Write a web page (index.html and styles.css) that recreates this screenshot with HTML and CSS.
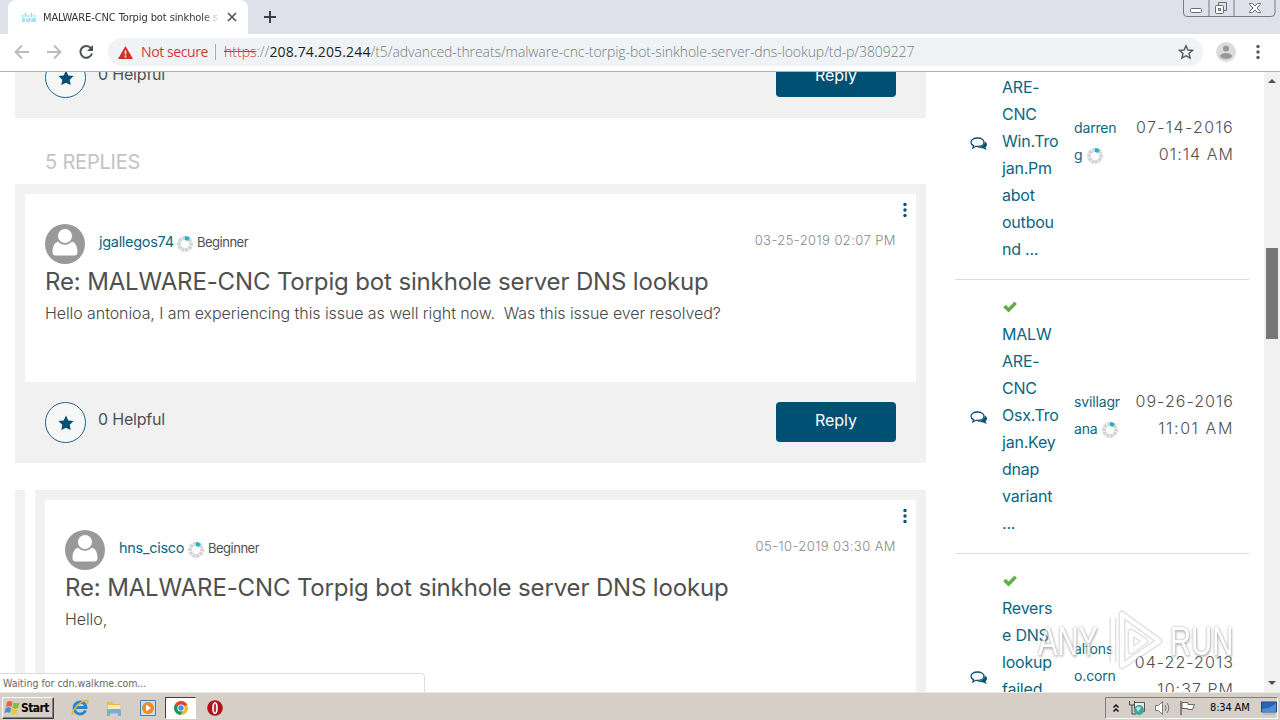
FILE: index.html
```html
<!DOCTYPE html>
<html lang="en">
<head>
<meta charset="utf-8">
<title>MALWARE-CNC Torpig bot sinkhole server DNS lookup</title>
<link rel="stylesheet" href="styles.css">
</head>
<body>
<svg class="defs" width="0" height="0">
  <symbol id="star" viewBox="0 0 16 16"><path d="M8 .5 10.3 5.4 15.6 6 11.7 9.7 12.7 15 8 12.8 3.3 15 4.3 9.7.4 6 5.7 5.4Z"/></symbol>
  <symbol id="person" viewBox="0 0 40 40"><circle cx="20" cy="20" r="20" fill="#999"/><path d="M13 17.5C9 19 7.5 23 7.5 28q0 3.500 3.500 3.500h18q3.500 0 3.500-3.500c0-5-1.500-9-5.500-10.500-1.500 2-4 3.200-7 3.200s-5.500-1.200-7-3.200Z" fill="#fff"/><circle cx="20" cy="12" r="7.500" fill="#fff" stroke="#999" stroke-width="1"/></symbol>
  <symbol id="spinner" viewBox="0 0 16 16"><circle cx="8" cy="8" r="6" fill="none" stroke="#d3d5d7" stroke-width="3.800" stroke-dasharray="3.200 .570" transform="rotate(-90 8 8)"/><path d="M8 2A6 6 0 0 1 11.800 3.400" fill="none" stroke="#1cb4d4" stroke-width="4"/></symbol>
  <symbol id="chat" viewBox="0 0 18 14"><path d="M7.500 1C3.700 1 1 2.900 1 5.200c0 1.500 1 2.700 2.600 3.400L2.900 11l3-1.700 1.600.1C11.300 9.400 14 7.500 14 5.200S11.300 1 7.500 1Z" fill="#fff" stroke="#0d4f73" stroke-width="1.300"/><path d="M14.800 4.500c1.500.8 2.200 1.800 2.200 3 0 1.100-.6 2-1.600 2.700l1.300 2.700-3.900-1.700c-2 .3-4.200-.1-5.500-1.100 4.500.1 7.500-2 7.500-5.600Z" fill="#0d4f73"/></symbol>
  <symbol id="check" viewBox="0 0 14 12"><path d="M.2 6.300 2.800 3.700l2.800 2.800L11.500.5l2.400 2.400-8.300 8.500Z" fill="#5fb045"/></symbol>
  <symbol id="dots" viewBox="0 0 6 16"><circle cx="3" cy="2.500" r="1.700"/><circle cx="3" cy="8" r="1.700"/><circle cx="3" cy="13.500" r="1.700"/></symbol>
</svg>

<div class="tabstrip">
  <div class="tab">
    <svg class="favicon" width="15" height="9" viewBox="0 0 15 9" stroke="#8bd6ee"><path d="M1.500 2v2M4.500 0v4M7.500 2v2M10.500 0v4M13.500 2v2" stroke-width="1.500"/><path d="M1 6h3M5 6h1M7 6h3M11 6h4M1 8h3M5 8h4M10 8h5" stroke-width="1.500"/></svg>
    <span class="tab-title">MALWARE-CNC Torpig bot sinkhole server</span>
    <svg class="tab-close" width="10" height="10" viewBox="0 0 10 10" stroke="#555" stroke-width="1.700"><path d="m1 1 8 8M9 1 1 9"/></svg>
  </div>
  <svg class="new-tab" width="14" height="14" viewBox="0 0 14 14" stroke="#3b3e43" stroke-width="2"><path d="M7 1v12M1 7h12"/></svg>
  <svg class="window-buttons" width="94" height="18" viewBox="0 0 94 18" fill="none"><path d="M.5 0v13q0 3.500 3.500 3.500h84q4 0 4-3.500V0M26 0v16.500M51 0v16.500" stroke="#777b84"/><rect x="7.500" y="8.500" width="11" height="4" rx="1" fill="#fff" stroke="#666a73"/><path d="M35.500 5.500V2.500h8v8h-3" stroke="#666a73"/><rect x="32.500" y="5.500" width="8" height="8" rx="1" fill="#fff" stroke="#666a73"/><rect x="35.500" y="8.500" width="2" height="2" stroke="#666a73"/><path d="M66.500 3.500h3l2.500 2.500 2.500-2.500h3v1L74 8l3.500 3.500v1h-3L72 10l-2.500 2.500h-3v-1L70 8l-3.500-3.500Z" fill="#fff" stroke="#666a73"/></svg>
</div>

<div class="toolbar">
  <svg class="nav" width="100" height="20" viewBox="0 0 100 20" fill="none"><path d="M29 10H16M22 3.500 15.500 10 22 16.500M47 10h13M54 3.500 60.500 10 54 16.500" stroke="#b9bbbe" stroke-width="1.800"/><path d="M91 6.200A5.900 5.900 0 1 0 92 11.500" stroke="#4d5156" stroke-width="2"/><path d="M93 3v6h-6Z" fill="#4d5156"/></svg>
  <div class="omnibox">
    <svg class="warn" width="15" height="13" viewBox="0 0 15 13"><path d="M7.500 0 15 13H0Z" fill="#d12f27"/><path d="M7.500 4.500v4M7.500 9.500v2" stroke="#fff" stroke-width="1.500"/></svg>
    <span class="insecure">Not secure</span>
    <span class="divider"></span>
    <span class="url"><s>https</s>://<b>208.74.205.244</b><span class="path">/t5/advanced-threats/malware-cnc-torpig-bot-sinkhole-server-dns-lookup/td-p/3809227</span></span>
    <svg class="bookmark" width="16" height="16" viewBox="0 0 16 16" fill="none" stroke="#55585c" stroke-width="1.400"><path d="M8 1.700 9.900 6l4.600.4-3.500 3.100 1.100 4.600L8 11.700l-4.100 2.400L5 9.500 1.500 6.400 6.100 6Z"/></svg>
  </div>
  <svg class="profile" width="20" height="20" viewBox="0 0 20 20"><circle cx="10" cy="10" r="10" fill="#dcdcdc"/><circle cx="10" cy="6.500" r="3" fill="#989898"/><ellipse cx="10" cy="14" rx="6" ry="3" fill="#989898"/></svg>
  <svg class="menu" width="6" height="16" fill="#55585c"><use href="#dots"/></svg>
</div>

<div class="viewport">
  <main class="thread">
    <div class="post-footer clipped">
      <span class="kudos"><svg width="16" height="16"><use href="#star"/></svg></span>
      <span class="helpful">0 Helpful</span>
      <span class="reply">Reply</span>
    </div>
    <h3 class="count">5 REPLIES</h3>
    <article class="post">
      <div class="card">
        <svg class="kebab" width="6" height="16"><use href="#dots"/></svg>
        <div class="author">
          <svg width="40" height="40"><use href="#person"/></svg>
          <a class="name name-first">jgallegos74</a>
          <svg class="spin" width="16" height="16"><use href="#spinner"/></svg>
          <span class="rank">Beginner</span>
          <time class="posted">03-25-2019 02:07 PM</time>
        </div>
        <h2 class="subject">Re: MALWARE-CNC Torpig bot sinkhole server DNS lookup</h2>
        <p class="body">Hello antonioa, I am experiencing this issue as well right now.&nbsp; Was this issue ever resolved?</p>
      </div>
      <div class="post-footer">
        <span class="kudos"><svg width="16" height="16"><use href="#star"/></svg></span>
        <span class="helpful">0 Helpful</span>
        <span class="reply">Reply</span>
      </div>
    </article>
    <div class="nested">
      <article class="post">
        <div class="card">
          <svg class="kebab" width="6" height="16"><use href="#dots"/></svg>
          <div class="author">
            <svg width="40" height="40"><use href="#person"/></svg>
            <a class="name name-second">hns_cisco</a>
            <svg class="spin" width="16" height="16"><use href="#spinner"/></svg>
            <span class="rank">Beginner</span>
            <time class="posted">05-10-2019 03:30 AM</time>
          </div>
          <h2 class="subject">Re: MALWARE-CNC Torpig bot sinkhole server DNS lookup</h2>
          <p class="body">Hello,</p>
        </div>
      </article>
    </div>
  </main>

  <aside class="related">
    <div class="row">
      <svg class="chat" width="18" height="14"><use href="#chat"/></svg>
      <a class="topic"><svg class="check" width="14" height="12"><use href="#check"/></svg><br>MALW<br>ARE-<br>CNC<br>Win.Tro<br>jan.Pm<br>abot<br>outbou<br>nd ...</a>
      <a class="user">darren<br>g <svg class="spin" width="16" height="16"><use href="#spinner"/></svg></a>
      <time class="when"><span class="day-wide">07-14-2016</span><br><span class="hour">01:14 AM</span></time>
    </div>
    <div class="row">
      <svg class="chat" width="18" height="14"><use href="#chat"/></svg>
      <a class="topic"><svg class="check" width="14" height="12"><use href="#check"/></svg><br>MALW<br>ARE-<br>CNC<br>Osx.Tro<br>jan.Key<br>dnap<br>variant<br>...</a>
      <a class="user">svillagr<br>ana <svg class="spin" width="16" height="16"><use href="#spinner"/></svg></a>
      <time class="when">09-26-2016<br><span class="hour hour-wide">11:01 AM</span></time>
    </div>
    <div class="row short">
      <svg class="chat" width="18" height="14"><use href="#chat"/></svg>
      <a class="topic"><svg class="check" width="14" height="12"><use href="#check"/></svg><br>Revers<br>e DNS<br>lookup<br>failed</a>
      <a class="user">alfons<br>o.corn<br><svg class="spin" width="16" height="16"><use href="#spinner"/></svg></a>
      <time class="when">04-22-2013<br><span class="hour">10:37 PM</span></time>
    </div>
  </aside>

  <div class="scrollbar">
    <svg width="16" height="16" fill="#505050"><path d="m4 11 4-4 4 4Z"/></svg>
    <div class="thumb"></div>
    <svg width="16" height="16" fill="#505050"><path d="m4 5 4 4 4-4Z"/></svg>
  </div>

  <div class="status">Waiting for cdn.walkme.com...</div>
  <div class="watermark">
    <span class="mark">ANY</span>
    <svg width="56" height="64" viewBox="0 0 56 64" fill="none" stroke-linejoin="round"><g stroke="#999" stroke-opacity=".38" stroke-width="7"><path d="M5 9v44M14 5v52L51 32 14 5Z"/><path d="M23 23v19l14-10Z"/></g><g stroke="#fff" stroke-width="4"><path d="M5 9v44M14 5v52L51 32 14 5Z"/><path d="M23 23v19l14-10Z"/></g></svg>
    <span class="mark">RUN</span>
  </div>
</div>

<footer class="taskbar">
  <div class="start">
    <svg width="17" height="16" viewBox="0 0 17 16"><path d="M3 2q3-2 5.500 0L7.500 7Q5 5.500 2 7Z" fill="#ee6230"/><path d="M9.500 2.500Q12 4 15.500 2.500L14 8q-3 1.300-5.500 0Z" fill="#7ebd3e"/><path d="M1.800 8q3-1.600 5.500 0L6 13q-2.500-1.500-5.500 0Z" fill="#4a8dd2"/><path d="M8.300 8.500q2.500 1.500 5.500.5l-1.500 5Q9 15.200 7 13.600Z" fill="#f7c331"/></svg>
    <b>Start</b>
  </div>
  <div class="launch">
    <svg width="18" height="18" viewBox="0 0 18 18" fill="none"><path d="M14.500 11.500A6 6 0 1 1 15 8.500H5" stroke="#2785ce" stroke-width="2.800"/><path d="M1.500 16C0 12 10 1 16 1.500c1.500.2 1 2 0 3.500" stroke="#e9b52e" stroke-width="1.500"/></svg>
    <svg width="18" height="18" viewBox="0 0 18 18"><path d="M2 3h5l1 2h7v10H2Z" fill="#e5bd4b"/><path d="M3 6h12v5H3Z" fill="#fbeaa5"/><path d="M2 17v-5q0-2 2-2h10q2 0 2 2v5h-3v-3H5v3Z" fill="#6fb0dc"/></svg>
    <svg width="18" height="18" viewBox="0 0 18 18"><path d="M1.500 1.500h15v15h-15Z" fill="#c5e1f5" stroke="#4381b8"/><circle cx="9" cy="9" r="6" fill="#f08a1d"/><path d="m7 5.500 5 3.500-5 3.500Z" fill="#fff"/></svg>
    <span class="active"><svg width="16" height="16" viewBox="0 0 16 16"><circle cx="8" cy="8" r="7" fill="#eabd24"/><path d="M8 8 2 4.500a7 7 0 0 1 12.100 0Z" fill="#db4437"/><path d="M8 8 2 4.500A7 7 0 0 0 7.500 15l3-5.500Z" fill="#179b58"/><path d="M8 4.500h6.100L14.500 5H8Z" fill="#db4437"/><circle cx="8" cy="8" r="3.600" fill="#fff"/><circle cx="8" cy="8" r="2.700" fill="#4a8af4"/></svg></span>
    <svg width="18" height="18" viewBox="0 0 18 18"><circle cx="9" cy="9" r="7.800" fill="#b01118"/><ellipse cx="9" cy="9" rx="2" ry="5.300" fill="#b93136" stroke="#fff" stroke-width="1.600"/></svg>
  </div>
  <div class="tray">
    <svg width="8" height="10" viewBox="0 0 8 10" fill="none" stroke="#111" stroke-width="1.500"><path d="M1.500 4.500 4 2l2.500 2.500M1.500 8.500 4 6l2.500 2.500"/></svg>
    <svg width="18" height="16" viewBox="0 0 18 16"><path d="M6.500 2.500h10v9h-10Z" fill="#e8eef0" stroke="#555"/><path d="M1.500 1v4h5V1M4 5v9h4" fill="none" stroke="#444"/><circle cx="11" cy="10" r="5" fill="#3ba6a0"/><path d="M8 8q3-3 5 0l-3 4Z" fill="#b7e3d5"/></svg>
    <svg width="17" height="16" viewBox="0 0 17 16" fill="#fff" stroke="#777"><path d="M1.500 5.500h3l4-4v13l-4-4h-3Z"/><path d="M11 5q2 3 0 6M13 3q3.500 5 0 10" fill="none"/></svg>
    <svg width="17" height="16" viewBox="0 0 17 16" fill="#fff" stroke="#666"><path d="M2 1v14" stroke-width="1.500"/><path d="M3 2.500h6v2h6.500l-2 5H9v-1H3Z"/></svg>
    <span class="clock">8:34 AM</span>
    <svg width="16" height="14" viewBox="0 0 16 14"><path d="M.5 1h15v10H.5Z" fill="#2c62b4" stroke="#1c478a"/><path d="M1 8q8 0 14-6v9H1Z" fill="#4b8bd7"/><path d="M2 13h12" stroke="#8eb0d4"/></svg>
  </div>
</footer>
</body>
</html>
```

FILE: styles.css
```css
* { box-sizing: border-box; }
body { margin: 0; width: 1280px; height: 720px; overflow: hidden; display: flex; flex-direction: column; background: #fff; font-family: Inter, "Liberation Sans", sans-serif; color: #505050; }
svg { flex: none; display: block; }
.defs { position: absolute; }
h2, h3, p { margin: 0; font-weight: 400; white-space: nowrap; }

.tabstrip { height: 34px; flex: none; display: flex; align-items: flex-start; padding-left: 8px; background: #dee1e9; }
.tab { width: 240px; height: 34px; display: flex; align-items: center; padding-left: 13px; background: #fff; border-radius: 8px 8px 0 0; }
.tab-title { width: 175px; margin-left: 7px; overflow: hidden; white-space: nowrap; font: 11px "DejaVu Sans Condensed", "DejaVu Sans", sans-serif; font-stretch: condensed; letter-spacing: -.1px; color: #333; -webkit-mask-image: linear-gradient(90deg, #000 160px, transparent 177px); mask-image: linear-gradient(90deg, #000 160px, transparent 177px); }
.tab-close { margin-left: 9px; }
.new-tab { margin: 10px 0 0 15px; }
.window-buttons { margin-left: auto; margin-right: 3px; }

.toolbar { height: 38px; flex: none; display: flex; align-items: center; padding-bottom: 1px; border-bottom: 1px solid #afb1b3; }
.nav { margin-right: 8px; }
.omnibox { width: 1095px; height: 28px; display: flex; align-items: center; padding-left: 10px; border-radius: 14px; background: #f0f3f5; font: 300 14px "Open Sans", "Noto Sans", sans-serif; white-space: nowrap; }
.insecure { width: 68px; margin: -2px 0 0 8px; font-weight: 400; color: #d13a35; letter-spacing: -.4px; }
.divider { width: 1px; height: 16px; margin: 0 8px 0 6px; background: #a9acb0; }
.url { flex: 1; margin-top: -2px; color: #777b80; }
.url s { color: #d13a35; }
.url b { color: #202124; font-weight: 400; letter-spacing: .15px; }
.path { letter-spacing: -.08px; }
.bookmark { margin-right: 9px; }
.profile { margin-left: 13px; }
.menu { margin-left: 19px; }

.viewport { position: relative; height: 620px; flex: none; display: flex; overflow: hidden; }
.thread { width: 926px; padding-left: 15px; flex: none; }
.post { padding-top: 10px; background: #f1f1f1; }
.post-footer { height: 81px; display: flex; align-items: flex-start; padding: 20px 30px; background: #f1f1f1; }
.clipped { margin-top: -35px; }
.kudos { width: 41px; height: 41px; display: grid; place-items: center; border: 1px solid #255f80; border-radius: 50%; background: #f6f7f7; fill: #005073; }
.helpful { margin: 6px 0 0 12px; font-size: 16px; line-height: 22px; letter-spacing: -.2px; }
.reply { width: 120px; height: 40px; margin-left: auto; border-radius: 4px; background: #005073; color: #fff; font-size: 16px; line-height: 37px; text-align: center; }
.count { height: 66px; padding: 29px 0 0 30px; font-size: 20px; line-height: 30px; color: #c3c3c3; letter-spacing: -.2px; }
.card { position: relative; height: 188px; margin: 0 10px; padding: 30px 20px 0; background: #fff; }
.kebab { position: absolute; top: 8px; right: 8px; fill: #0d4f73; }
.author { height: 40px; display: flex; align-items: center; }
.name { margin: -5px 2px 0 14px; font-size: 14.500px; letter-spacing: -.3px; color: #0b6680; }
.name-first { width: 76px; }
.name-second { width: 67px; }
.rank { margin: -4px 0 0 4px; font-size: 13px; letter-spacing: -.5px; }
.posted { margin: -8px 0 0 auto; font-size: 13px; font-weight: 300; letter-spacing: .42px; color: #888; }
.subject { font-size: 24px; line-height: 36px; letter-spacing: -.145px; }
.body { font-size: 16px; line-height: 27px; font-weight: 300; letter-spacing: -.08px; color: #484848; }
.nested { display: flex; height: 240px; margin-top: 27px; padding-left: 10px; border-left: 10px solid #f1f1f1; }
.nested .post { flex: 1; }
.nested .card { height: 230px; }

.related { width: 294px; margin: -66px 0 0 29px; flex: none; font-size: 16px; line-height: 27px; }
.row { height: 274px; display: grid; grid-template-columns: 32px 72px 62px 98px; align-items: center; padding-left: 15px; border-bottom: 1px solid #dcdcdc; white-space: nowrap; }
.row.short { height: 247px; }
.row.short .topic { height: 216px; }
.chat { margin-top: 2px; }
.topic { margin-top: -2px; letter-spacing: -.22px; color: #0b6680; }
.topic .check { display: inline-block; vertical-align: 0; margin-left: 1px; }
.user { margin-top: -4px; font-size: 14px; letter-spacing: -.15px; color: #0b6680; }
.user .spin { display: inline-block; vertical-align: -4px; margin-left: 1px; }
.when { text-align: right; margin: -3px 0 0 -8px; font-weight: 300; letter-spacing: 1.05px; }
.day-wide { letter-spacing: 1.35px; }
.hour { letter-spacing: 1.05px; }
.hour-wide { letter-spacing: 1.6px; }

.scrollbar { width: 16px; margin-left: auto; display: flex; flex-direction: column; justify-content: space-between; background: #f1f1f1; }
.thumb { width: 12px; height: 91px; margin: 160px 2px auto; background: #777; }
.status { position: absolute; left: -1px; bottom: 0; width: 426px; height: 19px; padding-left: 3px; border: 1px solid #ddd; border-bottom: 0; border-radius: 0 4px 0 0; background: #fff; font: 10.500px/18px "DejaVu Sans Condensed", "DejaVu Sans", sans-serif; font-stretch: condensed; color: #666; }
.watermark { position: absolute; left: 1038px; top: 537px; width: 196px; height: 64px; display: flex; align-items: center; justify-content: space-between; opacity: .75; color: #fff; font: 40px "Liberation Sans", sans-serif; text-shadow: 0 0 3px #888, 1px 2px 3px #aaa; }
.mark { width: 64px; transform: scaleX(.73); transform-origin: left; }

.taskbar { height: 28px; flex: none; display: flex; align-items: center; background: #d5cfc7; border-top: 1px solid #ece8e0; padding: 2px 2px 0; font-family: "DejaVu Sans Condensed", "DejaVu Sans", sans-serif; font-stretch: condensed; color: #000; }
.start { width: 52px; height: 22px; display: flex; align-items: center; padding-left: 1px; border: 1px solid; border-color: #fff #404040 #404040 #fff; box-shadow: inset -1px -1px #848078; font-size: 12px; letter-spacing: -.6px; }
.launch { display: flex; align-items: center; margin-left: 17px; gap: 16px; }
.active { width: 31px; height: 22px; display: grid; place-items: center; margin: 0 -6px 0 -8px; background: #fff; border: 1px solid; border-color: #404040 #fff #fff #404040; }
.tray { width: 173px; height: 22px; display: flex; align-items: center; margin-left: auto; padding-left: 6px; border: 1px solid; border-color: #848078 #fff #fff #848078; gap: 8px; }
.clock { font-size: 11px; margin: 0 0 0 6px; width: 43px; letter-spacing: -.15px; white-space: nowrap; }
```
